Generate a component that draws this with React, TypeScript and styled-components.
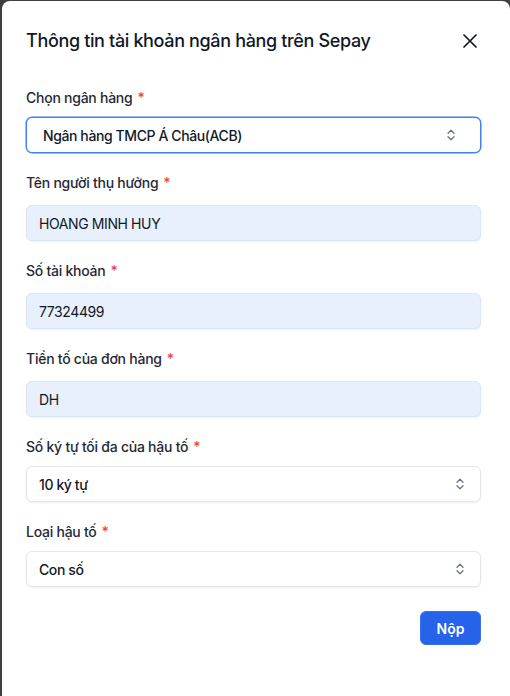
import React from "react";
import styled, { createGlobalStyle } from "styled-components";

const FONT = `"Inter", "Noto Sans", "Liberation Sans", sans-serif`;
const BACKDROP = "#3f3f3f";

const GlobalStyle = createGlobalStyle`
  html, body {
    margin: 0;
    padding: 0;
    background: #ffffff;
    overflow: hidden;
  }
  * {
    box-sizing: border-box;
  }
`;

// dark overlay behind the dialog: only its top edge and left edge peek out
const Backdrop = styled.div`
  height: 100vh;
  padding-top: 1px;
  border-left: 2px solid ${BACKDROP};
  background: linear-gradient(${BACKDROP} 0 12px, #ffffff 12px);
  font-family: ${FONT};
`;

const Modal = styled.div`
  height: 100%;
  background: #ffffff;
  border-radius: 8px 8px 0 0;
  padding: 26px 29px 24px 24px;
`;

const Header = styled.div`
  display: flex;
  align-items: center;
  justify-content: space-between;
  height: 28px;
`;

const Title = styled.h2`
  margin: 0;
  font-size: 18px;
  line-height: 28px;
  font-weight: 500;
  letter-spacing: -0.35px;
  color: #111827;
`;

const CloseButton = styled.button`
  display: flex;
  align-items: center;
  justify-content: center;
  width: 24px;
  height: 24px;
  padding: 0;
  margin-right: -1px;
  border: none;
  background: transparent;
  color: #111827;
  cursor: pointer;
`;

const Form = styled.form`
  display: flex;
  flex-direction: column;
  gap: 20px;
  margin-top: 33px;
`;

const Field = styled.div<{ $gap: number }>`
  display: flex;
  flex-direction: column;
  gap: ${(p) => p.$gap}px;
`;

const Label = styled.label`
  font-size: 14px;
  line-height: 20px;
  font-weight: 500;
  letter-spacing: -0.25px;
  color: #1f2937;
`;

const Required = styled.span`
  color: #ef4444;
  margin-left: 5px;
`;

const TextInput = styled.input`
  width: 100%;
  height: 36px;
  padding: 0 12px;
  border: 1px solid #dde5f2;
  border-radius: 6px;
  background: #e8f0fe;
  box-shadow: 0 1px 2px rgba(15, 23, 42, 0.06);
  font-family: ${FONT};
  font-size: 14px;
  letter-spacing: -0.4px;
  color: #111827;
  outline: none;
`;

const SelectButton = styled.button<{ $focused?: boolean }>`
  display: flex;
  align-items: center;
  justify-content: space-between;
  width: 100%;
  height: 36px;
  padding: ${(p) => (p.$focused ? "0 24px 0 16px" : "0 15px 0 12px")};
  border: 1px solid ${(p) => (p.$focused ? "#3b82f6" : "#e5e7eb")};
  border-radius: 6px;
  background: #ffffff;
  box-shadow: ${(p) =>
    p.$focused
      ? "0 0 0 0.5px #3b82f6"
      : "0 1px 2px rgba(15, 23, 42, 0.07)"};
  font-family: ${FONT};
  font-size: 14px;
  font-weight: 500;
  letter-spacing: -0.4px;
  color: #111827;
  text-align: left;
  cursor: pointer;
`;

const Chevron = styled.svg`
  flex-shrink: 0;
  color: #6b7280;
`;

const Footer = styled.div`
  display: flex;
  justify-content: flex-end;
  margin-top: 4px;
`;

const SubmitButton = styled.button`
  height: 34px;
  width: 61px;
  padding: 0;
  border: 1px solid #3b6ff0;
  border-radius: 6px;
  background: #2563eb;
  color: #ffffff;
  font-family: ${FONT};
  font-size: 14px;
  font-weight: 600;
  cursor: pointer;
`;

const UpDown = () => (
  <Chevron width="10" height="14" viewBox="0 0 10 14" fill="none">
    <path
      d="M2 5.2L5 2.2L8 5.2M2 8.8L5 11.8L8 8.8"
      stroke="currentColor"
      strokeWidth="1.3"
      strokeLinecap="round"
      strokeLinejoin="round"
    />
  </Chevron>
);

const CloseIcon = () => (
  <svg width="14" height="14" viewBox="0 0 14 14" fill="none">
    <path
      d="M1 1L13 13M13 1L1 13"
      stroke="currentColor"
      strokeWidth="1.7"
      strokeLinecap="round"
    />
  </svg>
);

const textFields = [
  { label: "Tên người thụ hưởng", value: "HOANG MINH HUY" },
  { label: "Số tài khoản", value: "77324499" },
  { label: "Tiền tố của đơn hàng", value: "DH" },
];

const selectFields = [
  { label: "Số ký tự tối đa của hậu tố", value: "10 ký tự" },
  { label: "Loại hậu tố", value: "Con số" },
];

const App = () => {
  return (
    <Backdrop>
      <GlobalStyle />
      <Modal>
        <Header>
          <Title>Thông tin tài khoản ngân hàng trên Sepay</Title>
          <CloseButton type="button" aria-label="Đóng">
            <CloseIcon />
          </CloseButton>
        </Header>
        <Form onSubmit={(e) => e.preventDefault()}>
          <Field $gap={9}>
            <Label>
              Chọn ngân hàng<Required>*</Required>
            </Label>
            <SelectButton type="button" $focused>
              <span>Ngân hàng TMCP Á Châu(ACB)</span>
              <UpDown />
            </SelectButton>
          </Field>
          {textFields.map((f) => (
            <Field $gap={12} key={f.label}>
              <Label>
                {f.label}
                <Required>*</Required>
              </Label>
              <TextInput readOnly value={f.value} />
            </Field>
          ))}
          {selectFields.map((f) => (
            <Field $gap={9} key={f.label}>
              <Label>
                {f.label}
                <Required>*</Required>
              </Label>
              <SelectButton type="button">
                <span>{f.value}</span>
                <UpDown />
              </SelectButton>
            </Field>
          ))}
          <Footer>
            <SubmitButton type="submit">Nộp</SubmitButton>
          </Footer>
        </Form>
      </Modal>
    </Backdrop>
  );
};

export default App;
